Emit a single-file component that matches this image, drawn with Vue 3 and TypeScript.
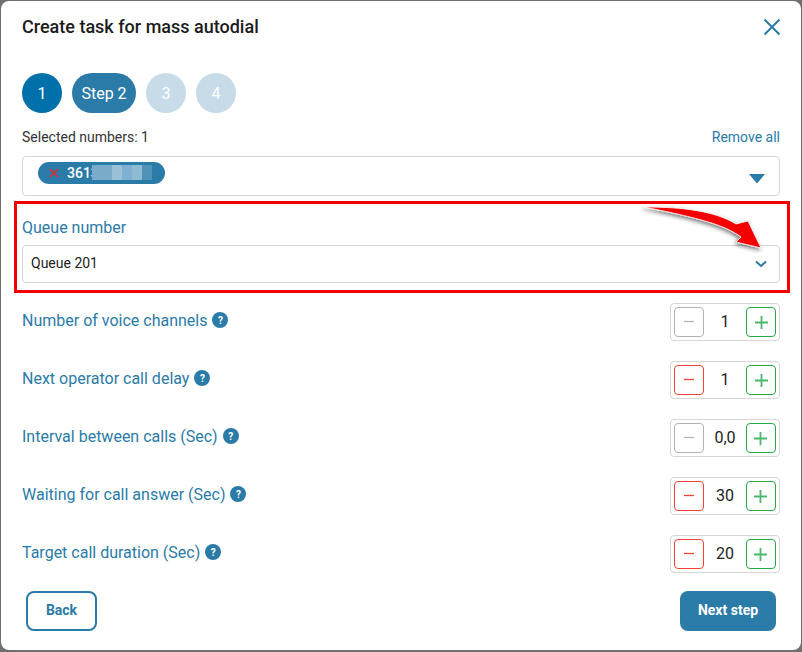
<script setup lang="ts">
interface Row { label: string; value: string; minusActive: boolean }
const rows: Row[] = [
  { label: 'Number of voice channels', value: '1', minusActive: false },
  { label: 'Next operator call delay', value: '1', minusActive: true },
  { label: 'Interval between calls (Sec)', value: '0,0', minusActive: false },
  { label: 'Waiting for call answer (Sec)', value: '30', minusActive: true },
  { label: 'Target call duration (Sec)', value: '20', minusActive: true },
]
const mosaic = ['#78acca', '#78acca', '#9ac0d8', '#7fb0cf', '#8fbad4', '#4f93b9']
</script>

<template>
  <div class="page">
    <div class="modal">
      <header class="head">
        <h1 class="title">Create task for mass autodial</h1>
        <button class="close" aria-label="Close">
          <svg width="18" height="18" viewBox="0 0 18 18"><path d="M1.500 1.500 16.500 16.500M16.500 1.500 1.500 16.500" stroke="#2b7ba8" stroke-width="2" fill="none" /></svg>
        </button>
      </header>

      <div class="steps">
        <span class="step done">1</span>
        <span class="step current">Step 2</span>
        <span class="step todo">3</span>
        <span class="step todo">4</span>
      </div>

      <div class="selected-head">
        <span class="selected-label">Selected numbers: 1</span>
        <a class="remove">Remove all</a>
      </div>

      <div class="numbers">
        <span class="chip">
          <svg class="chip-x" width="10" height="10" viewBox="0 0 10 10"><path d="M1 1 9 9M9 1 1 9" stroke="#e8262c" stroke-width="1.500" fill="none" /></svg>
          <span class="chip-text">3613</span>
          <span class="mosaic">
            <i v-for="(c, i) in mosaic" :key="i" :style="{ background: c }"></i>
          </span>
        </span>
        <svg class="tri" width="16" height="10" viewBox="0 0 16 10"><path d="M0 0H16L8 9.500Z" fill="#2b7ba8" /></svg>
      </div>

      <div class="queue">
        <label class="queue-label">Queue number</label>
        <div class="queue-select">
          <span class="queue-value">Queue 201</span>
          <svg width="12" height="8" viewBox="0 0 12 8"><path d="M1 1.500 6 6 11 1.500" stroke="#2b7ba8" stroke-width="2" fill="none" /></svg>
        </div>
      </div>

      <div class="rows">
        <div v-for="r in rows" :key="r.label" class="row">
          <div class="row-title">
            <span class="row-label">{{ r.label }}</span>
            <span class="help">?</span>
          </div>
          <div class="stepper">
            <span class="btn" :class="r.minusActive ? 'minus-on' : 'minus-off'">
              <svg width="10" height="10" viewBox="0 0 10 10"><path d="M0 4.500H10" stroke="currentColor" stroke-width="1.300" /></svg>
            </span>
            <span class="val">{{ r.value }}</span>
            <span class="btn plus">
              <svg width="13" height="13" viewBox="0 0 13 13"><path d="M0 6.500H13M6.500 0V13" stroke="currentColor" stroke-width="1.800" /></svg>
            </span>
          </div>
        </div>
      </div>

      <footer class="foot">
        <button class="back">Back</button>
        <button class="next">Next step</button>
      </footer>

      <div class="annot"></div>
      <svg class="arrow" width="130" height="50" viewBox="0 0 130 50">
        <defs>
          <filter id="sh" x="-20%" y="-40%" width="140%" height="180%">
            <feDropShadow dx="-1" dy="2" stdDeviation="2" flood-color="#000" flood-opacity="0.55" />
          </filter>
        </defs>
        <path d="M3 3C42 3 74 7 95 20L107 17 120 44 95 38 100 33C84 21 58 14 3 3Z" fill="#f50000" stroke="#fff" stroke-width="0.8" filter="url(#sh)" />
      </svg>
    </div>
  </div>
</template>

<style scoped>
.page {
  width: 802px;
  height: 652px;
  background: #6f6f6f;
  padding: 1px 1px 2px 1px;
  box-sizing: border-box;
  font-family: Roboto, "Liberation Sans", sans-serif;
}
.modal {
  position: relative;
  height: 100%;
  background: #fff;
  border-radius: 8px;
  padding: 0 21px 0 21px;
  box-sizing: border-box;
  display: flex;
  flex-direction: column;
}
.head {
  display: flex;
  align-items: center;
  justify-content: space-between;
  height: 52px;
}
.title {
  margin: 0;
  font-size: 18px;
  font-weight: 500;
  color: #1b1b1b;
  line-height: 52px;
}
.close {
  border: 0;
  background: none;
  padding: 0;
  display: flex;
  margin-right: -1px;
}
.steps {
  display: flex;
  gap: 10px;
  margin-top: 20px;
}
.step {
  height: 40px;
  min-width: 40px;
  border-radius: 20px;
  display: flex;
  align-items: center;
  justify-content: center;
  color: #fff;
  font-size: 16px;
}
.done { background: #0070ab; }
.current { background: #2b7ba8; width: 64px; }
.todo { background: #c7dbe8; }
.selected-head {
  display: flex;
  justify-content: space-between;
  align-items: center;
  margin-top: 15px;
  height: 18px;
  font-size: 14px;
}
.selected-label { color: #333; }
.remove { color: #2b7ba8; }
.numbers {
  margin-top: 10px;
  height: 40px;
  box-sizing: border-box;
  border: 1px solid #d6d6d6;
  border-radius: 4px;
  position: relative;
  padding: 5px 14px 5px 15px;
  display: flex;
  justify-content: space-between;
}
.chip {
  position: relative;
  height: 22px;
  width: 127px;
  box-sizing: border-box;
  border-radius: 11px;
  background: #2b7ba8;
  display: flex;
  align-items: center;
  padding-left: 11px;
  color: #fff;
  font-size: 14px;
  font-weight: 500;
  overflow: hidden;
}
.chip-x { margin-right: 8px; }
.chip-text { margin-bottom: 1px; }
.mosaic {
  position: absolute;
  left: 54px;
  top: 3px;
  display: flex;
  height: 15px;
}
.mosaic i {
  width: 10px;
  height: 100%;
  display: block;
}
.tri {
  align-self: center;
  margin-top: 5px;
}
.queue { margin-top: 22px; }
.queue-label {
  display: block;
  color: #2b7ba8;
  font-size: 16px;
  line-height: 19px;
}
.queue-select {
  margin-top: 8px;
  height: 38px;
  box-sizing: border-box;
  border: 1px solid #d6d6d6;
  border-radius: 4px;
  padding: 0 12px 0 8px;
  display: flex;
  align-items: center;
  justify-content: space-between;
  font-size: 14px;
  color: #222;
}
.queue-value { margin-bottom: 2px; }
.rows {
  margin-top: 20px;
  display: flex;
  flex-direction: column;
  gap: 20px;
}
.row {
  display: flex;
  align-items: center;
  height: 38px;
}
.row-title {
  display: flex;
  align-items: center;
  margin-bottom: 4px;
}
.row-label {
  color: #2b7ba8;
  font-size: 16px;
}
.help {
  width: 16px;
  height: 16px;
  border-radius: 50%;
  background: #2b7ba8;
  color: #fff;
  font-size: 10px;
  font-weight: 700;
  margin-left: 5px;
  display: flex;
  align-items: center;
  justify-content: center;
}
.stepper {
  margin-left: auto;
  width: 110px;
  height: 38px;
  box-sizing: border-box;
  border: 1px solid #d6d6d6;
  border-radius: 4px;
  padding: 3px;
  display: flex;
  align-items: center;
  justify-content: space-between;
}
.btn {
  width: 30px;
  height: 30px;
  box-sizing: border-box;
  border: 1px solid;
  border-radius: 4px;
  display: flex;
  align-items: center;
  justify-content: center;
}
.minus-off { border-color: #b3b3b3; color: #b3b3b3; }
.minus-on { border-color: #f44336; color: #f44336; }
.plus { border-color: #28a745; color: #4cb86b; }
.val {
  font-size: 16px;
  color: #222;
  margin-bottom: 2px;
}
.foot {
  margin-top: 18px;
  padding: 0 4px;
  display: flex;
  justify-content: space-between;
}
.foot button {
  height: 40px;
  border-radius: 8px;
  font-family: inherit;
  font-size: 14px;
  font-weight: 700;
  box-sizing: border-box;
  padding: 0 0 2px;
}
.back {
  width: 71px;
  background: #fff;
  border: 2px solid #2b7ba8;
  color: #2b7ba8;
}
.next {
  width: 96px;
  background: #2b7ba8;
  border: 0;
  color: #fff;
}
.annot {
  position: absolute;
  left: 13px;
  top: 200px;
  width: 776px;
  height: 92px;
  box-sizing: border-box;
  border: 3px solid #f00000;
}
.arrow {
  position: absolute;
  left: 640px;
  top: 203px;
}
</style>
